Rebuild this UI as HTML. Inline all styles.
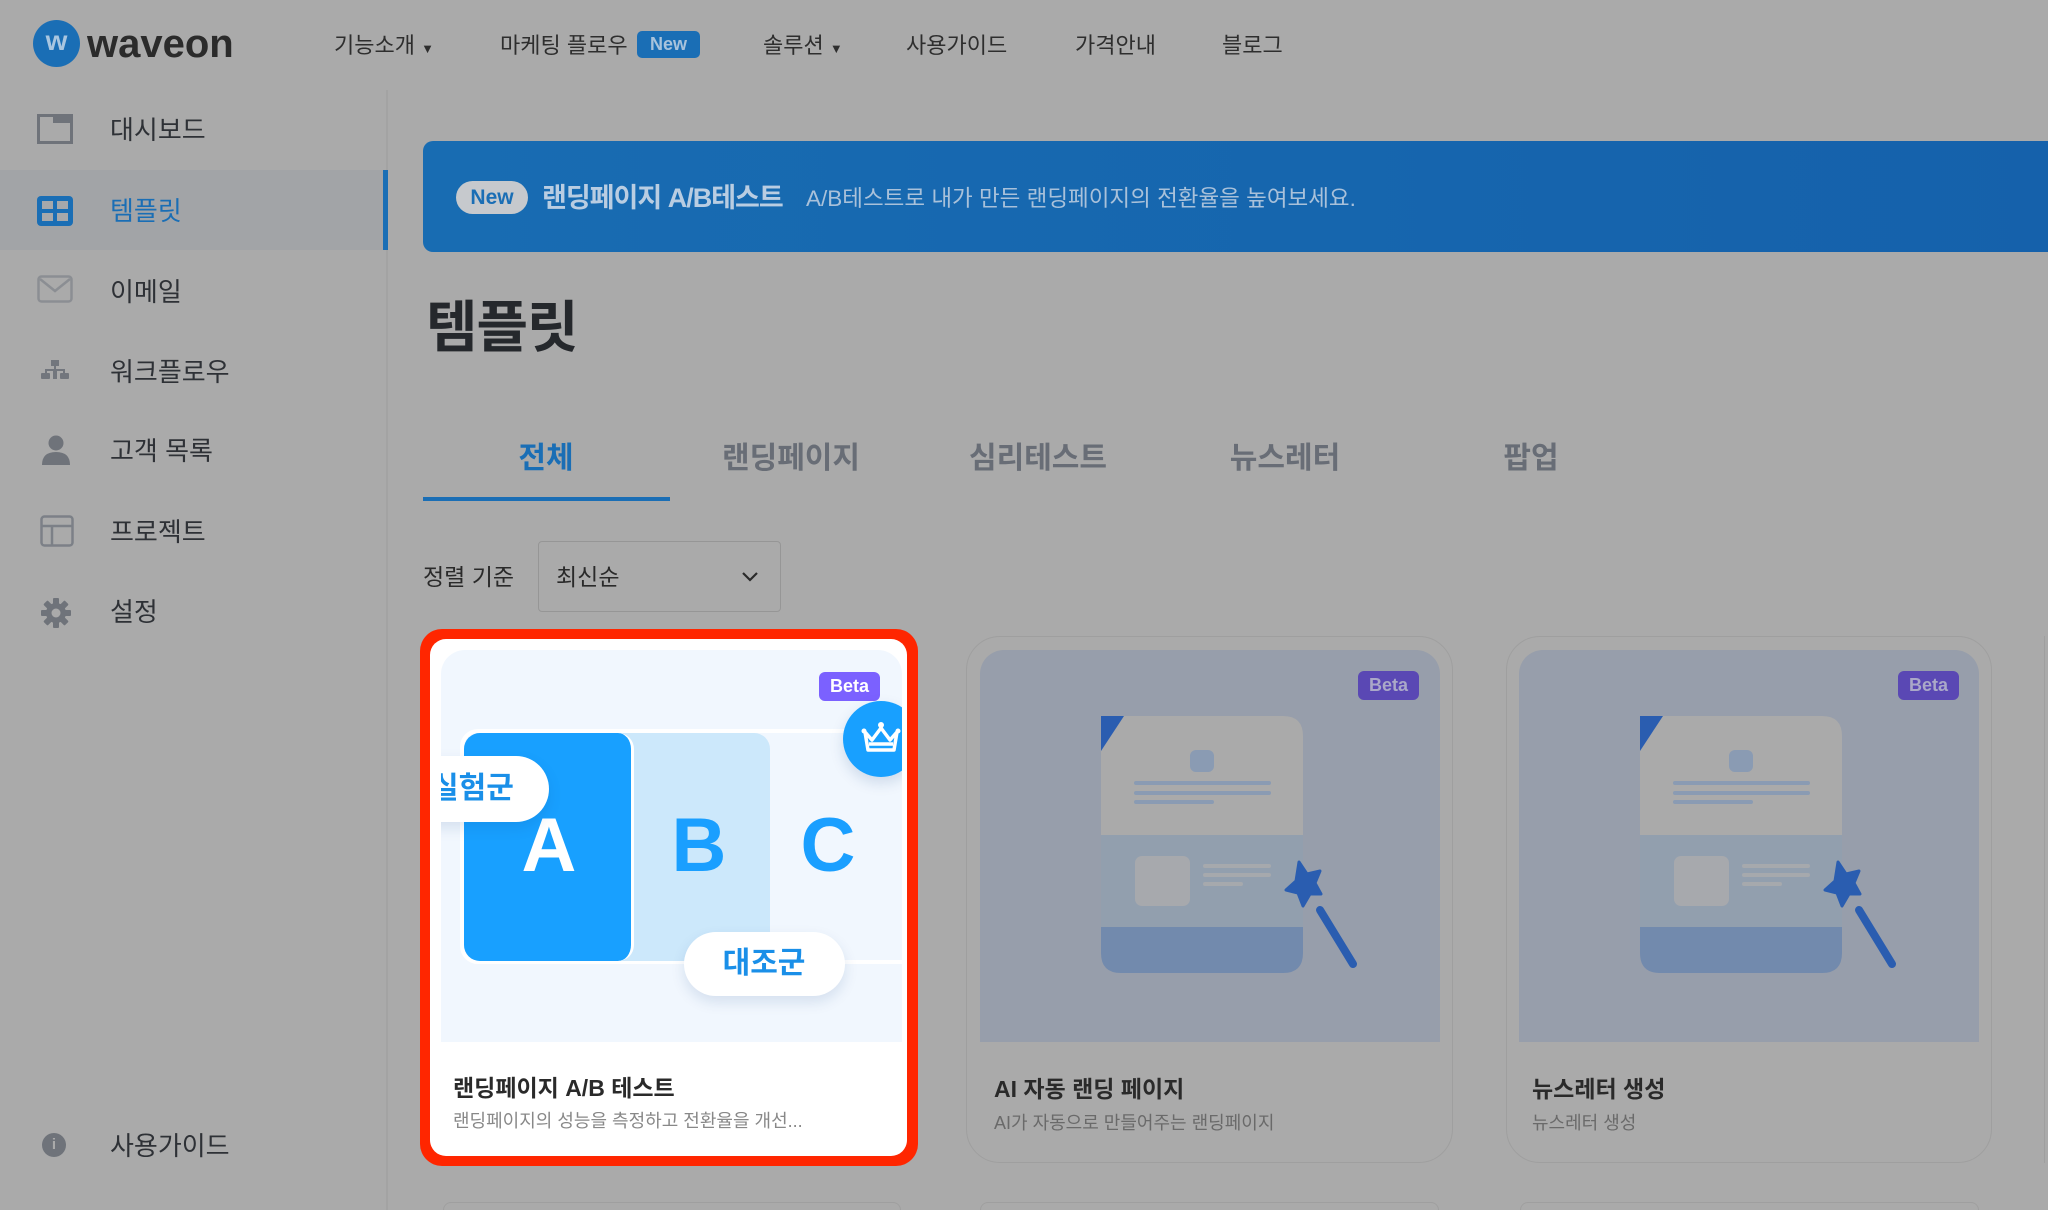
<!DOCTYPE html>
<html style="width:2048px;height:1210px;overflow:hidden"><head><meta charset="utf-8"><style>
*{margin:0;padding:0;box-sizing:border-box}
body{width:2048px;height:1210px;overflow:hidden;background:#aaaaaa;font-family:"Liberation Sans","Noto Sans CJK KR",sans-serif;color:#2a2a2a;position:relative}
.abs{position:absolute}
.nav{position:absolute;top:31px;font-size:22px;color:#2e2e2e;white-space:nowrap;line-height:30px}
.side{position:absolute;left:110px;font-size:26px;color:#2e3136;line-height:34px}
.tab{position:absolute;top:439px;font-size:30px;font-weight:700;color:#686d76;transform:translateX(-50%);white-space:nowrap;line-height:40px}
.card{position:absolute;border:1.5px solid #9f9f9f;border-radius:34px;background:#aaaaaa}
.beta{position:absolute;width:61px;height:29px;border-radius:6px;font-size:18px;font-weight:700;text-align:center;line-height:29px;color:#fff}
.ct{position:absolute;font-size:23px;font-weight:700;color:#2a2a2a;white-space:nowrap}
.cd{position:absolute;font-size:18px;color:#6a6a6a;white-space:nowrap}
#wrap{position:absolute;left:0;top:0;width:2048px;height:1210px;overflow:hidden}
</style></head><body><div id="wrap">
<!-- header -->
<div class="abs" style="left:33px;top:20px;width:47px;height:47px;border-radius:50%;background:#1a6eb5;color:#a9c6e0;font-size:28px;font-weight:700;text-align:center;line-height:42px">w</div>
<div class="abs" style="left:87px;top:16px;font-size:40px;font-weight:700;color:#2b2b2b;line-height:56px">waveon</div>
<div class="nav" style="left:334px">기능소개 <span style="font-size:13px">▼</span></div>
<div class="nav" style="left:500px">마케팅 플로우</div>
<div class="abs" style="left:637px;top:31px;width:63px;height:27px;border-radius:5px;background:#1a6eb5;color:#a8c3dc;font-size:18px;font-weight:700;text-align:center;line-height:27px">New</div>
<div class="nav" style="left:763px">솔루션 <span style="font-size:13px">▼</span></div>
<div class="nav" style="left:906px">사용가이드</div>
<div class="nav" style="left:1075px">가격안내</div>
<div class="nav" style="left:1222px">블로그</div>
<!-- sidebar -->
<div class="abs" style="left:386px;top:90px;width:2px;height:1120px;background:#a3a3a3"></div>
<div class="abs" style="left:0;top:170px;width:384px;height:80px;background:#a2a4a7"></div>
<div class="abs" style="left:383px;top:170px;width:5px;height:80px;background:#1a6eb5"></div>
<svg class="abs" style="left:37px;top:114px" width="36" height="30"><rect x="1.5" y="1.5" width="33" height="27" fill="none" stroke="#6f737a" stroke-width="3"/><rect x="16" y="1" width="19" height="8" fill="#6f737a"/></svg>
<div class="side" style="top:113px">대시보드</div>
<svg class="abs" style="left:37px;top:196px" width="36" height="30"><rect x="0" y="0" width="36" height="30" rx="4" fill="#1a6eb5"/><rect x="5" y="5" width="11" height="8" fill="#a6a8ab"/><rect x="20" y="5" width="11" height="8" fill="#a6a8ab"/><rect x="5" y="17" width="11" height="8" fill="#a6a8ab"/><rect x="20" y="17" width="11" height="8" fill="#a6a8ab"/></svg>
<div class="side" style="top:194px;color:#1a6eb5">템플릿</div>
<svg class="abs" style="left:37px;top:275px" width="36" height="28"><rect x="1.5" y="1.5" width="33" height="25" rx="3" fill="none" stroke="#8b8e93" stroke-width="2.5"/><path d="M3 4 L18 16 L33 4" fill="none" stroke="#8b8e93" stroke-width="2.5"/></svg>
<div class="side" style="top:275px">이메일</div>
<svg class="abs" style="left:41px;top:360px" width="28" height="20" fill="#72767d"><rect x="10" y="0" width="8" height="6"/><rect x="13" y="5" width="2" height="5"/><rect x="4" y="9" width="20" height="2"/><rect x="4" y="9" width="2" height="5"/><rect x="22" y="9" width="2" height="5"/><rect x="0" y="13" width="9" height="6" rx="1"/><rect x="19" y="13" width="9" height="6" rx="1"/><rect x="12" y="9" width="4" height="10"/></svg>
<div class="side" style="top:355px">워크플로우</div>
<svg class="abs" style="left:42px;top:435px" width="28" height="30" fill="#6f737a"><circle cx="14" cy="8" r="7.5"/><path d="M0 30 Q0 17 14 17 Q28 17 28 30Z"/></svg>
<div class="side" style="top:434px">고객 목록</div>
<svg class="abs" style="left:40px;top:515px" width="34" height="32"><rect x="1.5" y="1.5" width="31" height="29" rx="3" fill="none" stroke="#7c8087" stroke-width="2.5"/><path d="M2 11 H32 M12 11 V31" stroke="#7c8087" stroke-width="2.5"/></svg>
<div class="side" style="top:515px">프로젝트</div>
<svg class="abs" style="left:41px;top:598px" width="30" height="30" viewBox="0 0 30 30"><g fill="#6f737a"><circle cx="15" cy="15" r="10"/><rect x="12" y="0" width="6" height="30" rx="1"/><rect x="12" y="0" width="6" height="30" rx="1" transform="rotate(45 15 15)"/><rect x="12" y="0" width="6" height="30" rx="1" transform="rotate(90 15 15)"/><rect x="12" y="0" width="6" height="30" rx="1" transform="rotate(135 15 15)"/></g><circle cx="15" cy="15" r="4.5" fill="#aaaaaa"/></svg>
<div class="side" style="top:595px">설정</div>
<div class="abs" style="left:42px;top:1133px;width:24px;height:24px;border-radius:50%;background:#6f737a;color:#aaa;font-size:15px;font-weight:700;text-align:center;line-height:24px">i</div>
<div class="side" style="top:1129px">사용가이드</div>
<!-- banner -->
<div class="abs" style="left:423px;top:141px;width:1625px;height:111px;border-radius:10px 0 0 10px;background:linear-gradient(90deg,#186cb2,#1561ab)"></div>
<div class="abs" style="left:456px;top:181px;width:72px;height:33px;border-radius:17px;background:#c6c9cd;color:#1a6eb5;font-size:21px;font-weight:700;text-align:center;line-height:33px">New</div>
<div class="abs" style="left:542px;top:180px;font-size:27px;font-weight:700;color:#b9cde2;line-height:36px;letter-spacing:-1px">랜딩페이지 A/B테스트</div>
<div class="abs" style="left:806px;top:182px;font-size:22.5px;color:#a9c1da;line-height:34px">A/B테스트로 내가 만든 랜딩페이지의 전환율을 높여보세요.</div>
<!-- heading -->
<div class="abs" style="left:426px;top:293px;font-size:56px;font-weight:700;color:#25282c;line-height:70px;letter-spacing:-1px">템플릿</div>
<div class="tab" style="left:546px;color:#1a6eb5">전체</div>
<div class="tab" style="left:791px">랜딩페이지</div>
<div class="tab" style="left:1038px">심리테스트</div>
<div class="tab" style="left:1285px">뉴스레터</div>
<div class="tab" style="left:1531px">팝업</div>
<div class="abs" style="left:423px;top:497px;width:247px;height:4px;background:#1a6eb5"></div>
<div class="abs" style="left:423px;top:561px;font-size:23px;color:#2a2a2a;line-height:32px">정렬 기준</div>
<div class="abs" style="left:538px;top:541px;width:243px;height:71px;border:1.5px solid #969696;border-radius:4px"></div>
<div class="abs" style="left:556px;top:561px;font-size:23px;color:#2a2a2a;line-height:32px">최신순</div>
<svg class="abs" style="left:741px;top:571px" width="18" height="12"><path d="M2 2 L9 9 L16 2" fill="none" stroke="#2a2a2a" stroke-width="2.2"/></svg>
<!-- card 1 highlighted -->
<div class="abs" style="left:420px;top:629px;width:498px;height:537px;border-radius:22px;background:#ff2600"></div>
<div class="abs" style="left:430px;top:639px;width:477px;height:517px;border-radius:16px;background:#fff;overflow:hidden">
 <div class="abs" style="left:11px;top:11px;width:461px;height:392px;border-radius:24px 24px 0 0;background:#f1f7fe;overflow:hidden">
  <div class="abs" style="left:19px;top:79px;width:460px;height:235px;border:4px solid #fff;border-radius:18px"></div>
  <div class="abs" style="left:23px;top:83px;width:306px;height:228px;border-radius:16px;background:#cce8fb"></div>
  <div class="abs" style="left:23px;top:83px;width:170px;height:228px;border-radius:16px;background:#18a0ff;border:3px solid #fff;border-width:0 3px 0 0"></div>
  <div class="abs" style="left:108px;top:156px;transform:translateX(-50%);font-size:76px;font-weight:700;color:#fff;line-height:80px">A</div>
  <div class="abs" style="left:258px;top:156px;transform:translateX(-50%);font-size:76px;font-weight:700;color:#1a9fff;line-height:80px">B</div>
  <div class="abs" style="left:387px;top:156px;transform:translateX(-50%);font-size:76px;font-weight:700;color:#1a9fff;line-height:80px">C</div>
  <div class="abs" style="left:-40px;top:106px;width:148px;height:66px;border-radius:33px;background:#fff;box-shadow:0 6px 14px rgba(0,60,120,.12)"></div>
  <div class="abs" style="left:-10px;top:119px;font-size:30px;font-weight:700;color:#1a8fe8;line-height:40px">실험군</div>
  <div class="abs" style="left:243px;top:282px;width:161px;height:64px;border-radius:32px;background:#fff;box-shadow:0 6px 14px rgba(0,60,120,.12)"></div>
  <div class="abs" style="left:323px;top:294px;transform:translateX(-50%);font-size:30px;font-weight:700;color:#1a8fe8;line-height:40px">대조군</div>
  <div class="beta" style="left:378px;top:22px;background:#7b61ff">Beta</div>
  <div class="abs" style="left:402px;top:51px;width:76px;height:76px;border-radius:50%;background:#18a0ff;box-shadow:0 6px 14px rgba(0,60,120,.15)"></div>
  <svg class="abs" style="left:420px;top:70px" width="40" height="34"><g fill="none" stroke="#fff" stroke-width="3.5" stroke-linejoin="round"><path d="M4 12 L11 20 L20 8 L29 20 L36 12 L33 30 H7 Z"/><path d="M8 24 H32"/></g><circle cx="20" cy="5" r="3" fill="#fff"/><circle cx="3" cy="11" r="2.5" fill="#fff"/><circle cx="37" cy="11" r="2.5" fill="#fff"/></svg>
 </div>
 <div class="ct" style="left:23px;top:430px">랜딩페이지 A/B 테스트</div>
 <div class="cd" style="left:23px;top:468px;color:#888">랜딩페이지의 성능을 측정하고 전환율을 개선...</div>
</div>
<!-- card 2 & 3 -->
<div class="card" style="left:966px;top:636px;width:487px;height:527px"></div>
<div class="card" style="left:1506px;top:636px;width:486px;height:527px"></div>
<svg class="abs" style="left:980px;top:650px" width="460" height="392"><rect width="460" height="392" rx="24" fill="#979eab"/><rect y="360" width="460" height="32" fill="#979eab"/>
 <g id="doc"><path d="M121 86 Q121 66 141 66 H303 Q323 66 323 86 V185 H121Z" fill="#aaaaaa"/><rect x="121" y="185" width="202" height="92" fill="#929fae"/><path d="M121 277 H323 V303 Q323 323 303 323 H141 Q121 323 121 303Z" fill="#728aad"/><path d="M121 66 H144 L121 101Z" fill="#2a5db0"/><rect x="210" y="100" width="24" height="22" rx="6" fill="#8a9bb3"/><rect x="154" y="131" width="137" height="4" rx="2" fill="#8a9bb3"/><rect x="154" y="141" width="137" height="4" rx="2" fill="#8a9bb3"/><rect x="154" y="150" width="80" height="4" rx="2" fill="#8a9bb3"/><rect x="155" y="206" width="55" height="50" rx="7" fill="#a7a9ad"/><rect x="223" y="214" width="68" height="4" rx="2" fill="#a6a9ad"/><rect x="223" y="223" width="68" height="4" rx="2" fill="#a6a9ad"/><rect x="223" y="232" width="40" height="4" rx="2" fill="#a6a9ad"/><path d="M319 212 L327 224 L340 221 L335 233 L341 244 L330 244 L323 256 L318 243 L306 240 L316 231Z" fill="#2a5db0" stroke="#2a5db0" stroke-width="3" stroke-linejoin="round"/><line x1="340" y1="260" x2="373" y2="314" stroke="#2a5db0" stroke-width="8" stroke-linecap="round"/></g>
</svg>
<svg class="abs" style="left:1519px;top:650px" width="460" height="392"><rect width="460" height="392" rx="24" fill="#979eab"/><rect y="360" width="460" height="32" fill="#979eab"/><use href="#doc"/></svg>
<div class="beta" style="left:1358px;top:671px;background:#5a48b4;color:#aaa8c8">Beta</div>
<div class="beta" style="left:1898px;top:671px;background:#5a48b4;color:#aaa8c8">Beta</div>
<div class="ct" style="left:994px;top:1070px">AI 자동 랜딩 페이지</div>
<div class="cd" style="left:994px;top:1109px">AI가 자동으로 만들어주는 랜딩페이지</div>
<div class="ct" style="left:1532px;top:1070px">뉴스레터 생성</div>
<div class="cd" style="left:1532px;top:1109px">뉴스레터 생성</div>
<div class="card" style="left:2044px;top:636px;width:4px;height:527px;border-radius:0;border-width:0 0 0 1.5px"></div>
<!-- next row peeks -->
<div class="card" style="left:443px;top:1202px;width:458px;height:8px;border-bottom:0;border-radius:20px 20px 0 0"></div>
<div class="card" style="left:980px;top:1202px;width:459px;height:8px;border-bottom:0;border-radius:20px 20px 0 0"></div>
<div class="card" style="left:1520px;top:1202px;width:459px;height:8px;border-bottom:0;border-radius:20px 20px 0 0"></div>
</div></body></html>
